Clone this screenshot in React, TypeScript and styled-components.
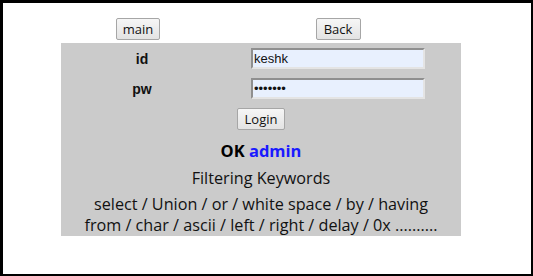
import React from "react";
import styled, { createGlobalStyle } from "styled-components";

const Global = createGlobalStyle`
  html, body { margin: 0; padding: 0; background: #ffffff; }
  #root { width: 533px; height: 276px; }
`;

const Frame = styled.div`
  box-sizing: border-box;
  width: 533px;
  height: 276px;
  border-style: solid;
  border-color: #000;
  border-width: 3px 2px 2px 3px;
  padding: 15px 0 0 58px;
  background: #fff;
`;

const Column = styled.div`
  width: 400px;
  display: flex;
  flex-direction: column;
`;

const TwoCols = styled.div<{ $h: number; $mt?: number }>`
  display: grid;
  grid-template-columns: 154px 246px;
  align-items: center;
  height: ${(p) => p.$h}px;
  margin-top: ${(p) => p.$mt ?? 0}px;
`;

const Cell = styled.div`
  display: flex;
  justify-content: center;
  align-items: center;
`;

const Button = styled.button<{ $w: number }>`
  box-sizing: border-box;
  width: ${(p) => p.$w}px;
  height: 22px;
  padding: 0;
  margin: 0;
  border: 1px solid #a6a6a6;
  border-radius: 2px;
  background: linear-gradient(#f6f6f6, #e3e3e3);
  font-family: "Open Sans", "Liberation Sans", sans-serif;
  font-size: 13px;
  color: #111;
  line-height: 20px;
`;

const Panel = styled.div`
  background: #cbcbcb;
  margin-top: 3px;
  padding-top: 5px;
  height: 193px;
  box-sizing: border-box;
  display: flex;
  flex-direction: column;
`;

const Label = styled.div`
  font-family: "Liberation Sans", Arial, sans-serif;
  font-weight: bold;
  font-size: 14px;
  color: #111;
  padding-left: 8px;
`;

const Input = styled.input`
  box-sizing: border-box;
  width: 174px;
  height: 21px;
  margin: 0;
  padding: 0 1px;
  background: #e8f0fe;
  border-style: solid;
  border-width: 2px;
  border-color: #8f8f8f #e4e4e4 #e4e4e4 #8f8f8f;
  font-family: "Liberation Sans", Arial, sans-serif;
  font-size: 13px;
  color: #111;
  outline: none;
`;

const Center = styled.div<{ $mt: number }>`
  display: flex;
  justify-content: center;
  margin-top: ${(p) => p.$mt}px;
`;

const Status = styled.div`
  text-align: center;
  font-family: "Open Sans", "Noto Sans CJK KR", sans-serif;
  font-weight: bold;
  font-size: 16.5px;
  line-height: 20px;
  color: #000;
  margin-top: 11px;
`;

const Admin = styled.span`
  color: #1a1aff;
`;

const Text = styled.div<{ $mt: number }>`
  text-align: center;
  font-family: "Open Sans", "Noto Sans CJK KR", sans-serif;
  font-size: 16.2px;
  line-height: 21px;
  color: #111;
  margin-top: ${(p) => p.$mt}px;
`;

export default function App() {
  return (
    <>
      <Global />
      <Frame>
        <Column>
          <TwoCols $h={22}>
            <Cell>
              <Button $w={44}>main</Button>
            </Cell>
            <Cell>
              <Button $w={45}>Back</Button>
            </Cell>
          </TwoCols>
          <Panel>
            <TwoCols $h={21}>
              <Cell>
                <Label>id</Label>
              </Cell>
              <Cell>
                <Input readOnly defaultValue="keshk" />
              </Cell>
            </TwoCols>
            <TwoCols $h={21} $mt={9}>
              <Cell>
                <Label>pw</Label>
              </Cell>
              <Cell>
                <Input type="password" readOnly defaultValue="1234567" />
              </Cell>
            </TwoCols>
            <Center $mt={9}>
              <Button $w={48}>Login</Button>
            </Center>
            <Status>
              OK <Admin>admin</Admin>
            </Status>
            <Text $mt={7}>Filtering Keywords</Text>
            <Text $mt={5}>
              select / Union / or / white space / by / having
              <br />
              from / char / ascii / left / right / delay / 0x ..........
            </Text>
          </Panel>
        </Column>
      </Frame>
    </>
  );
}
